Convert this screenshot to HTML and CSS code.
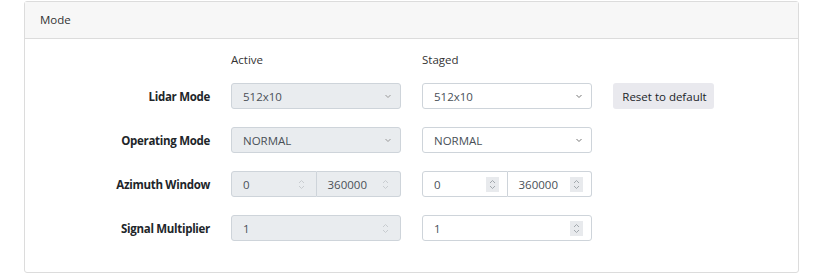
FILE: index.html
```html
<!DOCTYPE html>
<html lang="en">
<head>
    <meta charset="UTF-8">
    <meta name="viewport" content="width=device-width, initial-scale=1.0">
    <title>Mode</title>
    <link rel="stylesheet" href="styles.css">
</head>
<body>
    <div class="mode__card">
        <div class="mode__header">Mode</div>
        <div class="mode__body">
            <div class="mode__grid">
                <div></div>
                <div class="col__title">Active</div>
                <div class="col__title">Staged</div>
                <div></div>

                <div class="row__label">Lidar Mode</div>
                <div class="field field--disabled">
                    <span>512x10</span>
                    <svg class="chevron" width="8" height="5" viewBox="0 0 8 5"><path d="M1.5 1l2.5 2.5 2.5-2.5" fill="none" stroke="#999" stroke-width="1"/></svg>
                </div>
                <div class="field">
                    <span>512x10</span>
                    <svg class="chevron" width="8" height="5" viewBox="0 0 8 5"><path d="M1.5 1l2.5 2.5 2.5-2.5" fill="none" stroke="#777" stroke-width="1"/></svg>
                </div>
                <div><button class="reset__btn">Reset to default</button></div>

                <div class="row__label">Operating Mode</div>
                <div class="field field--disabled">
                    <span>NORMAL</span>
                    <svg class="chevron" width="8" height="5" viewBox="0 0 8 5"><path d="M1.5 1l2.5 2.5 2.5-2.5" fill="none" stroke="#999" stroke-width="1"/></svg>
                </div>
                <div class="field">
                    <span>NORMAL</span>
                    <svg class="chevron" width="8" height="5" viewBox="0 0 8 5"><path d="M1.5 1l2.5 2.5 2.5-2.5" fill="none" stroke="#777" stroke-width="1"/></svg>
                </div>
                <div></div>

                <div class="row__label">Azimuth Window</div>
                <div class="field__group">
                    <div class="field field--disabled field--left">
                        <span>0</span>
                        <span class="spin"><svg width="7" height="11" viewBox="0 0 7 11"><path d="M1 4l2.5-2.5L6 4M1 7l2.5 2.5L6 7" fill="none" stroke="#c4c8cc" stroke-width="0.9"/></svg></span>
                    </div>
                    <div class="field field--disabled field--right">
                        <span>360000</span>
                        <span class="spin"><svg width="7" height="11" viewBox="0 0 7 11"><path d="M1 4l2.5-2.5L6 4M1 7l2.5 2.5L6 7" fill="none" stroke="#c4c8cc" stroke-width="0.9"/></svg></span>
                    </div>
                </div>
                <div class="field__group">
                    <div class="field field--left">
                        <span>0</span>
                        <span class="spin spin--active"><svg width="7" height="11" viewBox="0 0 7 11"><path d="M1 4l2.5-2.5L6 4M1 7l2.5 2.5L6 7" fill="none" stroke="#9aa0a6" stroke-width="0.9"/></svg></span>
                    </div>
                    <div class="field field--right">
                        <span>360000</span>
                        <span class="spin spin--active"><svg width="7" height="11" viewBox="0 0 7 11"><path d="M1 4l2.5-2.5L6 4M1 7l2.5 2.5L6 7" fill="none" stroke="#9aa0a6" stroke-width="0.9"/></svg></span>
                    </div>
                </div>
                <div></div>

                <div class="row__label">Signal Multiplier</div>
                <div class="field field--disabled">
                    <span>1</span>
                    <span class="spin"><svg width="7" height="11" viewBox="0 0 7 11"><path d="M1 4l2.5-2.5L6 4M1 7l2.5 2.5L6 7" fill="none" stroke="#c4c8cc" stroke-width="0.9"/></svg></span>
                </div>
                <div class="field">
                    <span>1</span>
                    <span class="spin spin--active"><svg width="7" height="11" viewBox="0 0 7 11"><path d="M1 4l2.5-2.5L6 4M1 7l2.5 2.5L6 7" fill="none" stroke="#9aa0a6" stroke-width="0.9"/></svg></span>
                </div>
                <div></div>
            </div>
        </div>
    </div>
</body>
</html>
```

FILE: styles.css
```css
body {
    margin: 0;
    background: #fff;
    font-family: 'Open Sans', 'Noto Sans', sans-serif;
    font-size: 11.5px;
    color: #212529;
}
.mode__card {
    margin: 1px 0 0 24px;
    width: 773px;
    height: 270px;
    border: 1px solid #dcdcdc;
    border-radius: 3px;
    box-sizing: content-box;
}
.mode__header {
    height: 36px;
    line-height: 36px;
    padding-left: 15px;
    background: #f7f7f7;
    border-bottom: 1px solid #dcdcdc;
    color: #333;
}
.mode__body {
    padding-top: 12px;
}
.mode__grid {
    display: grid;
    grid-template-columns: 185px 170px 170px auto;
    column-gap: 21px;
    row-gap: 18px;
    align-items: center;
}
.col__title {
    line-height: 18px;
    margin-bottom: -4px;
    color: #333;
}
.row__label {
    text-align: right;
    font-weight: bold;
    letter-spacing: -0.3px;
    color: #212529;
}
.field {
    height: 26px;
    box-sizing: border-box;
    border: 1px solid #ced4da;
    border-radius: 3px;
    background: #fff;
    color: #495057;
    padding: 0 8px 0 11px;
    display: flex;
    align-items: center;
    justify-content: space-between;
}
.field--disabled {
    background: #e9ecef;
}
.field__group {
    display: flex;
}
.field__group .field {
    flex: 1;
}
.field--left {
    border-top-right-radius: 0;
    border-bottom-right-radius: 0;
}
.field--right {
    border-left: none;
    border-top-left-radius: 0;
    border-bottom-left-radius: 0;
}
.chevron {
    display: block;
}
.spin {
    width: 13px;
    height: 15px;
    display: flex;
    align-items: center;
    justify-content: center;
}
.spin--active {
    background: #e8eaed;
}
.reset__btn {
    height: 26px;
    width: 101px;
    border: none;
    border-radius: 3px;
    background: #e9e9ee;
    color: #212529;
    font-family: inherit;
    font-size: 11.5px;
    padding: 0 0 0 2px;
}
```
